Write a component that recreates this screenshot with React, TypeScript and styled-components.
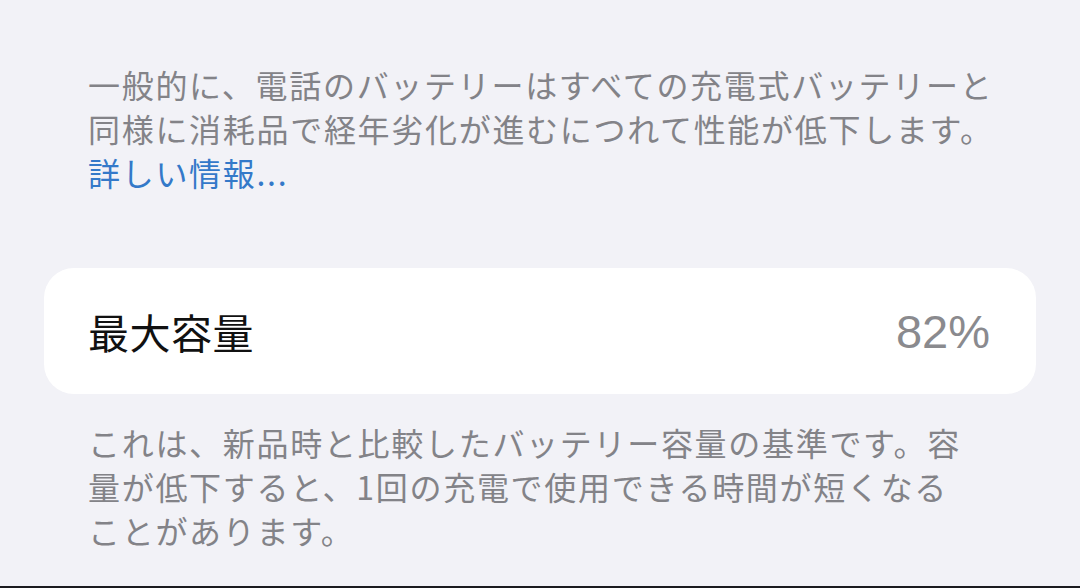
import styled, {createGlobalStyle} from "styled-components";

const GlobalStyle = createGlobalStyle`
  html, body {
    margin: 0;
    padding: 0;
    background-color: #f2f2f7;
  }
  body {
    font-family: "Noto Sans CJK JP", "Noto Sans", sans-serif;
  }
`;

function App() {
  return (
    <Page>
      <GlobalStyle/>
      <Note>
        一般的に、電話のバッテリーはすべての充電式バッテリーと<br/>
        同様に消耗品で経年劣化が進むにつれて性能が低下します。<br/>
        <MoreLink href="#">詳しい情報...</MoreLink>
      </Note>
      <Card>
        <Label>最大容量</Label>
        <Value>82%</Value>
      </Card>
      <Footer>
        これは、新品時と比較したバッテリー容量の基準です。容<br/>
        量が低下すると、1回の充電で使用できる時間が短くなる<br/>
        ことがあります。
      </Footer>
      <BottomEdge/>
    </Page>
  );
}

export default App;

const Page = styled.div`
  width: 1080px;
  height: 588px;
  display: flex;
  flex-direction: column;
  overflow: hidden;
`;

const Note = styled.p`
  margin: 62px 0 0;
  padding: 0 44px 0 88px;
  font-size: 32px;
  line-height: 44px;
  letter-spacing: 1.7px;
  color: #838388;
  white-space: nowrap;
`;

const MoreLink = styled.a`
  color: #3479c9;
  text-decoration: none;
`;

const Card = styled.div`
  margin: 74px 44px 0 44px;
  height: 126px;
  border-radius: 30px;
  background-color: #ffffff;
  display: flex;
  align-items: center;
  justify-content: space-between;
  padding: 0 46px 0 44px;
`;

const Label = styled.span`
  font-size: 41px;
  color: #111111;
  letter-spacing: 0.5px;
`;

const Value = styled.span`
  font-family: "Liberation Sans", Arial, sans-serif;
  font-size: 47px;
  color: #8a8a8e;
`;

const Footer = styled.p`
  margin: 26px 0 0;
  padding: 0 44px 0 88px;
  font-size: 32px;
  line-height: 44px;
  letter-spacing: 1.7px;
  color: #838388;
  white-space: nowrap;
  flex: 1;
`;

const BottomEdge = styled.div`
  height: 2px;
  background-color: #1b1b1f;
`;
